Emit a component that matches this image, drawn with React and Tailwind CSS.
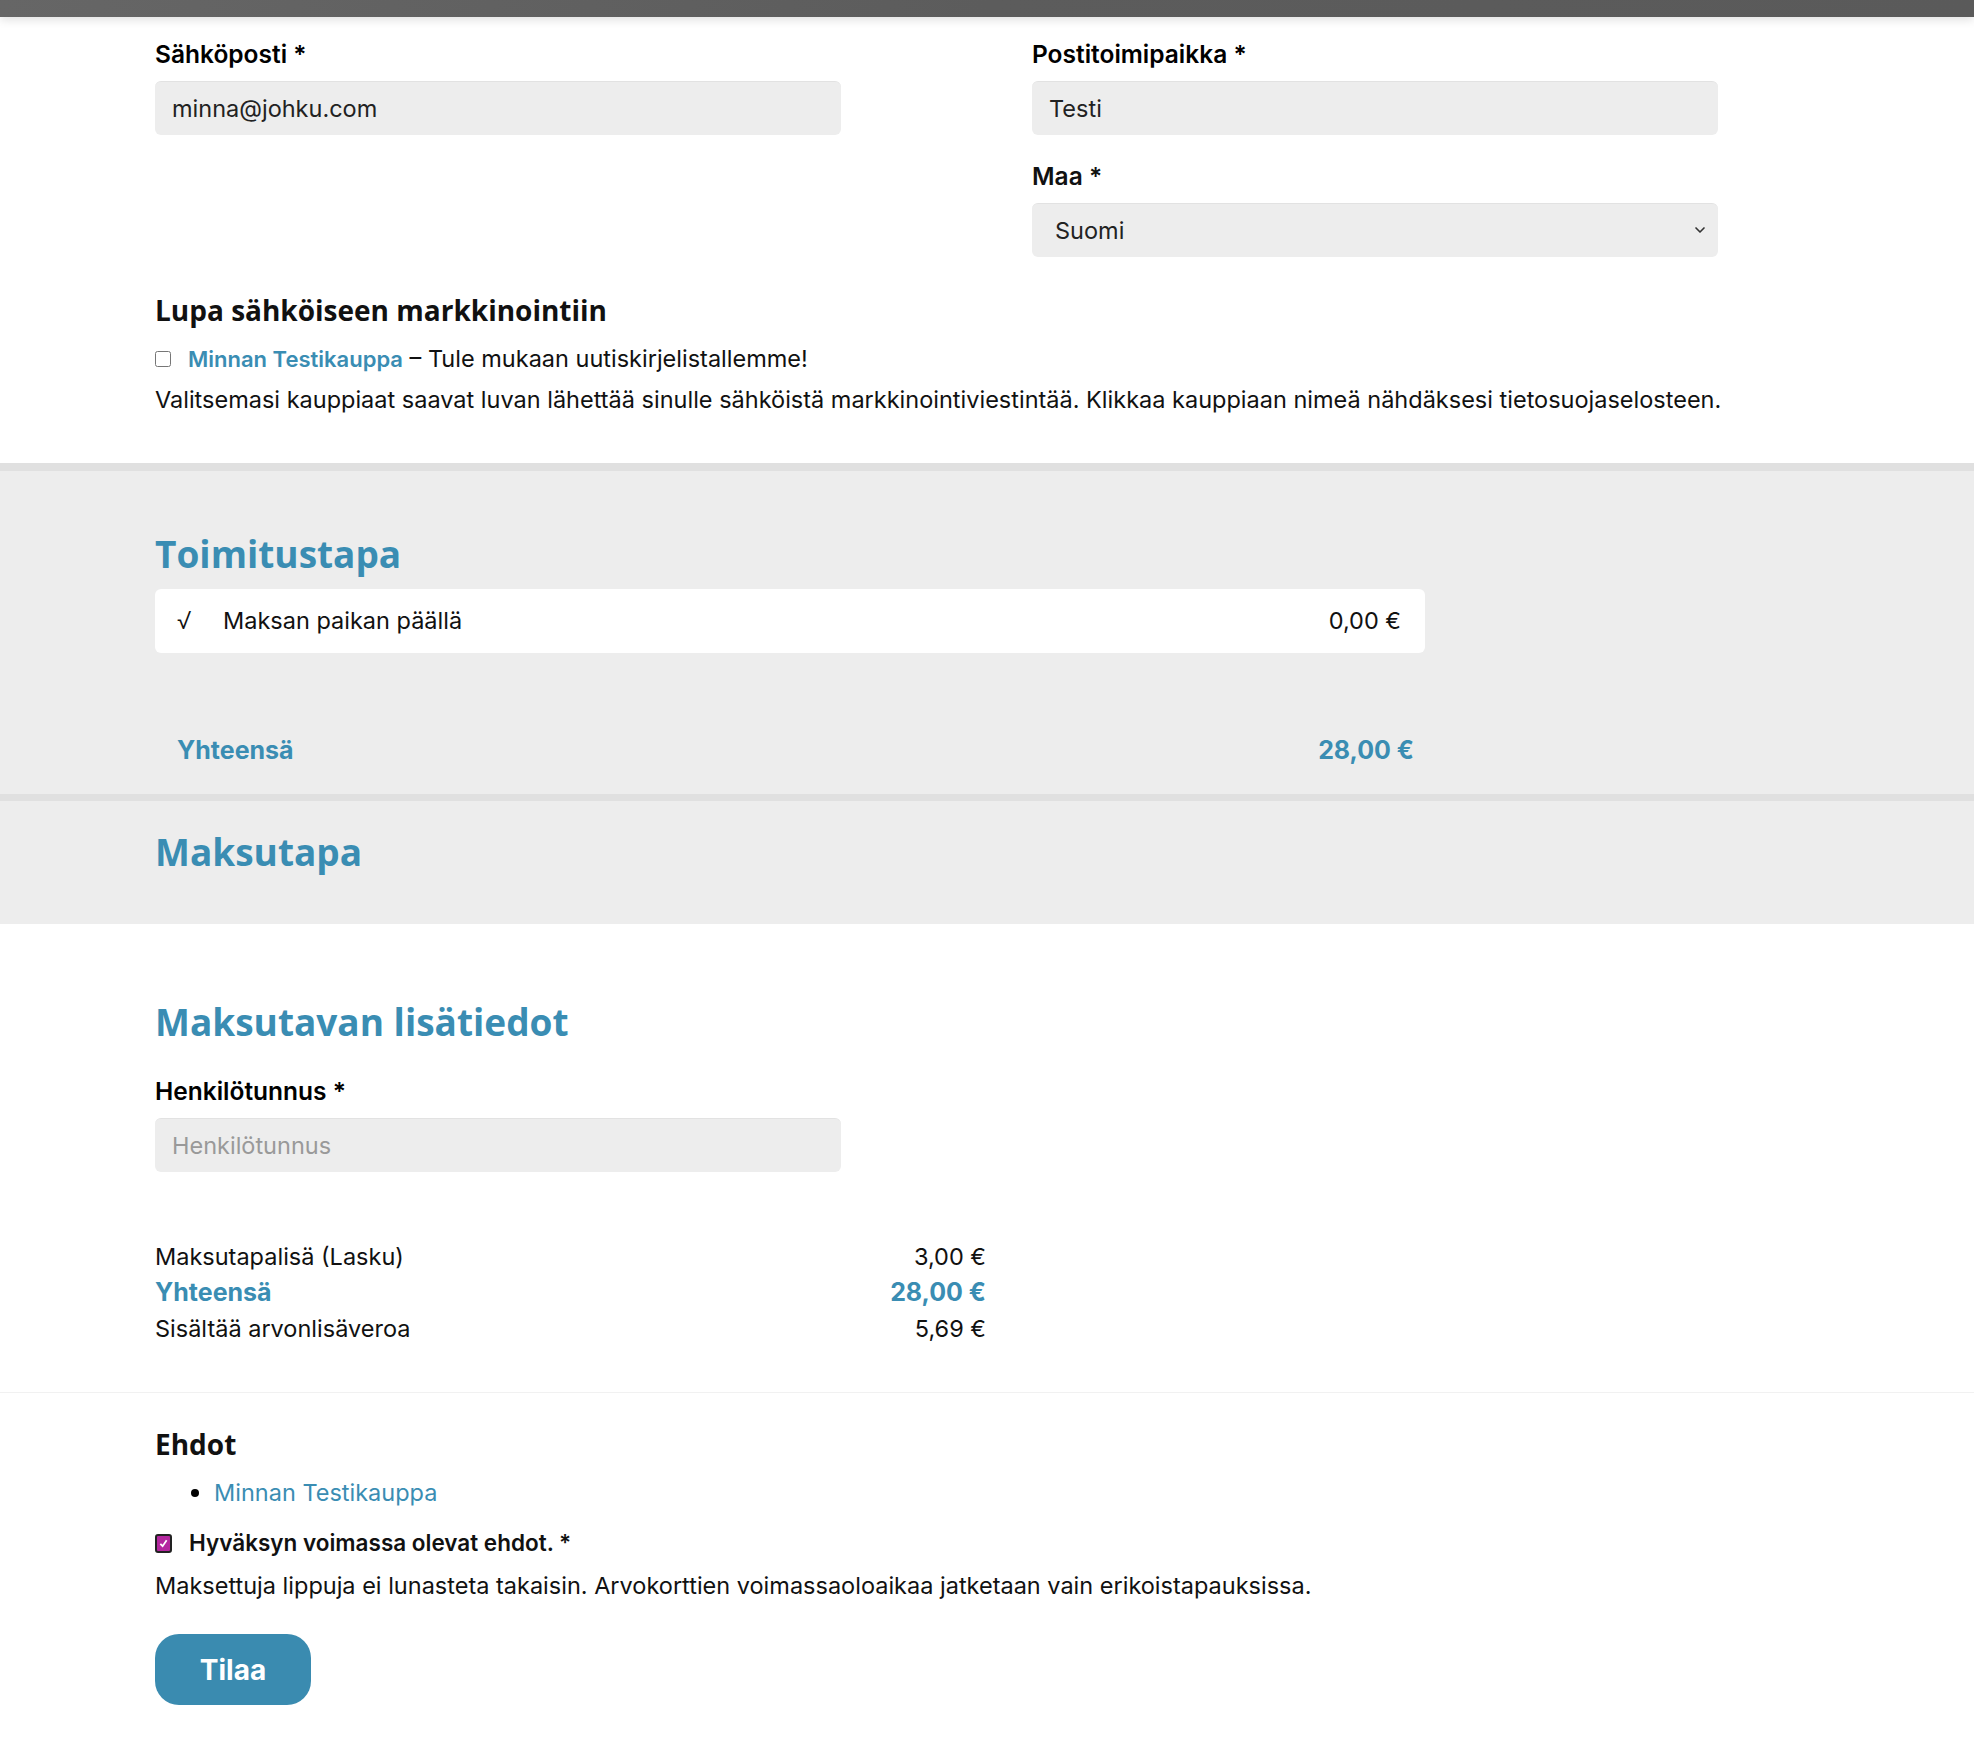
import { ChevronDown } from 'lucide-react';

const body = { fontFamily: 'Inter, "Liberation Sans", sans-serif' };
const head = { fontFamily: '"Open Sans", "Liberation Sans", sans-serif' };

function Field({ label, value, placeholder }) {
  return (
    <div>
      <div className="h-[28px] leading-[28px] text-[24.5px] font-semibold text-black mb-[13px]">{label}</div>
      <input
        readOnly
        value={value}
        placeholder={placeholder}
        className="w-full h-[54px] rounded-[6px] bg-[#ededed] border-t border-[#e2e2e2] px-[17px] text-[23.5px] text-[#222] placeholder:text-[#999] outline-none"
      />
    </div>
  );
}

function Heading({ children, className = '' }) {
  return (
    <h2 style={head} className={`h-[44px] leading-[44px] text-[37px] font-bold text-[#3a8db3] ${className}`}>
      {children}
    </h2>
  );
}

export default function App() {
  return (
    <div style={body} className="min-h-[1752px] bg-white text-[#111]">
      {/* top bar with soft shadow under it */}
      <div className="h-[17px] bg-gradient-to-r from-[#666] via-[#5c5c5c] to-[#5a5a5a] shadow-[0_3px_10px_rgba(0,0,0,0.12)]" />

      {/* contact fields */}
      <section className="px-[155px] pt-[23px] pb-[49px]">
        <div className="grid grid-cols-[686px_686px] gap-x-[191px]">
          <div>
            <Field label="Sähköposti *" value="minna@johku.com" />
          </div>
          <div className="flex flex-col gap-[27px]">
            <Field label="Postitoimipaikka *" value="Testi" />
            <div>
              <div className="h-[28px] leading-[28px] text-[24.5px] font-semibold mb-[13px]">Maa *</div>
              <div className="relative">
                <select className="w-full h-[54px] appearance-none rounded-[6px] bg-[#ededed] border-t border-[#e2e2e2] px-[23px] text-[23.5px] text-[#222] outline-none">
                  <option>Suomi</option>
                </select>
                <ChevronDown className="absolute right-[10px] top-[19px] w-[16px] h-[16px] text-[#333]" strokeWidth={2.5} />
              </div>
            </div>
          </div>
        </div>

        <h3 style={head} className="mt-[36px] h-[34px] leading-[34px] text-[28px] font-bold">Lupa sähköiseen markkinointiin</h3>
        <label className="mt-[18px] flex items-center h-[28px] text-[23.5px]">
          <input type="checkbox" className="w-[16px] h-[16px] mr-[17px]" />
          <span className="text-[22px] font-semibold text-[#3a8db3]">Minnan Testikauppa</span>
          <span>&nbsp;– Tule mukaan uutiskirjelistallemme!</span>
        </label>
        <p className="mt-[13px] h-[28px] leading-[28px] text-[23.5px] whitespace-nowrap">
          Valitsemasi kauppiaat saavat luvan lähettää sinulle sähköistä markkinointiviestintää. Klikkaa kauppiaan nimeä nähdäksesi tietosuojaselosteen.
        </p>
      </section>

      {/* delivery */}
      <section className="border-t-[8px] border-[#e0e0e0] bg-[#ededed] px-[155px] pt-[61px] pb-[30px]">
        <Heading>Toimitustapa</Heading>
        <div className="mt-[13px] w-[1270px] h-[64px] rounded-[6px] bg-white flex items-center px-[22px] text-[23.5px]">
          <span className="w-[46px] font-light">√</span>
          <span className="flex-1">Maksan paikan päällä</span>
          <span className="pr-[2px]">0,00 €</span>
        </div>
        <div className="mt-[83px] w-[1270px] flex justify-between pl-[22px] pr-[11px] h-[28px] leading-[28px] text-[25px] font-bold text-[#3a8db3]">
          <span>Yhteensä</span>
          <span>28,00 €</span>
        </div>
      </section>

      {/* payment */}
      <section className="border-t-[7px] border-[#e0e0e0] bg-[#ededed] px-[155px] pt-[29px] pb-[50px]">
        <Heading>Maksutapa</Heading>
      </section>

      <section className="px-[155px] pt-[76px]">
        <Heading>Maksutavan lisätiedot</Heading>
        <div className="mt-[33px] w-[686px]">
          <Field label="Henkilötunnus *" value="" placeholder="Henkilötunnus" />
        </div>

        <div className="mt-[66px] w-[831px] text-[23.5px]">
          <div className="h-[37px] flex items-center justify-between">
            <span>Maksutapalisä (Lasku)</span>
            <span>3,00 €</span>
          </div>
          <div className="h-[36px] flex items-center justify-between text-[25px] font-bold text-[#3a8db3]">
            <span>Yhteensä</span>
            <span>28,00 €</span>
          </div>
          <div className="h-[36px] flex items-center justify-between">
            <span>Sisältää arvonlisäveroa</span>
            <span>5,69 €</span>
          </div>
        </div>
      </section>

      <div className="mt-[45px] border-t border-[#f1f1f1]" />

      {/* terms and submit */}
      <section className="px-[155px] pt-[34px] pb-[47px]">
        <h3 style={head} className="h-[34px] leading-[34px] text-[28px] font-bold">Ehdot</h3>
        <ul className="mt-[18px] h-[28px] flex items-center text-[23.5px]">
          <li className="flex items-center pl-[36px]">
            <span className="w-[8px] h-[8px] rounded-full bg-black mr-[15px]" />
            <span className="text-[#3a8db3]">Minnan Testikauppa</span>
          </li>
        </ul>
        <label className="mt-[22px] flex items-center h-[28px] text-[22.5px] font-semibold">
          <span className="w-[17px] h-[19px] rounded-[3px] border-2 border-[#222] bg-[#b4279f] flex items-center justify-center mr-[17px]">
            <svg viewBox="0 0 10 10" className="w-[9px] h-[9px]">
              <path d="M1.5 5.5 L4 8 L8.5 1.5" fill="none" stroke="white" strokeWidth="2" />
            </svg>
          </span>
          Hyväksyn voimassa olevat ehdot. *
        </label>
        <p className="mt-[15px] h-[28px] leading-[28px] text-[23.5px]">
          Maksettuja lippuja ei lunasteta takaisin. Arvokorttien voimassaoloaikaa jatketaan vain erikoistapauksissa.
        </p>
        <button className="mt-[34px] w-[156px] h-[71px] rounded-[24px] bg-[#3a8bb0] text-white text-[28px] font-bold">
          Tilaa
        </button>
      </section>
    </div>
  );
}
